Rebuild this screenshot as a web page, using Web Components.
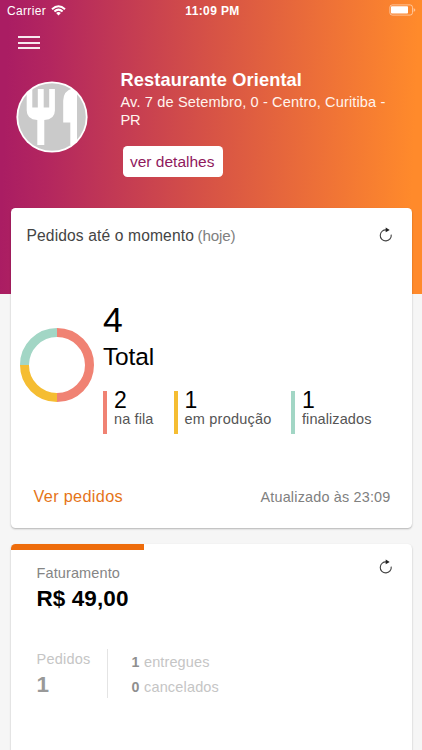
<!DOCTYPE html>
<html lang="pt-BR"><head><meta charset="utf-8"><title>Restaurante Oriental</title>
<style>
html,body{margin:0;height:750px;overflow:hidden;background:#f6f6f6;font-family:"Liberation Sans",Arial,sans-serif}
</style></head><body>
<restaurant-app></restaurant-app>
<script>
const define=(name,html,ready)=>customElements.define(name,class extends HTMLElement{
  constructor(){super();this.attachShadow({mode:'open'}).innerHTML=html}
  connectedCallback(){if(ready)ready.call(this)}
});

/* One line of text: s = size, lh = line height, w = tracked width, c = colour, b = bold */
define('fit-text',`<style>:host{display:block;white-space:nowrap;flex:none}span{display:inline-block;vertical-align:top}</style><span><slot></slot></span>`,function(){
  const g=k=>this.getAttribute(k), s=this.shadowRoot.querySelector('span');
  this.style.fontSize=g('s')+'px';
  this.style.lineHeight=(g('lh')||20)+'px';
  this.style.height=(g('lh')||20)+'px';
  if(g('c'))this.style.color=g('c');
  if(this.hasAttribute('b'))this.style.fontWeight='700';
  const w=parseFloat(g('w'));
  if(w){
    const n=this.textContent.length;
    s.style.letterSpacing=((w-s.getBoundingClientRect().width)/n)+'px';
    this.style.width=w+'px';
  }
});

define('refresh-icon',`<style>:host{display:block;width:14px;height:16px}svg{display:block}</style>
<svg width="14" height="16" viewBox="0 0 14 16"><path d="M7.6 3A5.5 5.5 0 1 0 12.2 7.6" fill="none" stroke="#444" stroke-width="1.15"/><path d="M6.7.6L10.7 2.9L6.7 5.3Z" fill="#222"/></svg>`);

define('menu-icon',`<style>:host{display:flex;flex-direction:column;justify-content:space-between;width:22px;height:13px}i{height:2px;background:#fff;opacity:.9}</style><i></i><i></i><i></i>`);

define('wifi-icon',`<style>:host{display:block;width:15px;height:11px}svg{display:block}</style>
<svg width="15" height="11" viewBox="0 0 15 11" fill="none" stroke="#fff" stroke-width="2"><path d="M1 4.2Q7.5-1.8 14 4.2M3.4 6.5Q7.5 2.8 11.6 6.5"/><path d="M7.5 10.6L5.1 8.1Q7.5 6.1 9.9 8.1Z" fill="#fff" stroke="none"/></svg>`);

define('battery-icon',`<style>:host{display:block;width:27px;height:12px}svg{display:block}</style>
<svg width="27" height="12" viewBox="0 0 27 12"><rect x=".9" y=".9" width="22.6" height="10.2" rx="2.4" fill="none" stroke="#fff" stroke-opacity=".5"/><rect x="2" y="2.2" width="17" height="7.4" rx=".8" fill="#fff"/><path d="M24.6 4Q26.4 5 26.4 6T24.6 8Z" fill="#fff" fill-opacity=".5"/></svg>`);

define('restaurant-avatar',`<style>:host{display:block;width:72px;height:72px;flex:none}svg{display:block}</style>
<svg width="72" height="72" viewBox="0 0 72 72"><defs><clipPath id="c"><circle cx="36" cy="36" r="35"/></clipPath></defs>
<circle cx="36" cy="36" r="35.6" fill="#fff"/><circle cx="36" cy="36" r="33.8" fill="#cacaca"/>
<g fill="#fff" clip-path="url(#c)"><path d="M10.7 8H16.3V26.5H21.8V8H27.7V26.5H33.2V8H38.9V29.5Q38.9 38.4 28.3 39V64H21.3V39Q10.7 38.4 10.7 29.5Z"/>
<path d="M61 8V64H54.3V41.5H47.2V19.5Q47.6 10 56.2 7.6Q59 7 61 8Z"/></g></svg>`);

define('status-bar',`<style>:host{display:grid;grid-template-columns:1fr auto 1fr;height:22px;color:#fff;padding:0 6px 0 7px;box-sizing:border-box}
.l{display:flex;gap:5px}wifi-icon{margin-top:5px}battery-icon{justify-self:end;margin-top:4px}.t{margin-left:2px}</style>
<div class="l"><fit-text s="12" lh="22" w="39">Carrier</fit-text><wifi-icon></wifi-icon></div>
<fit-text class="t" s="12" lh="22" b w="54.5">11:09 PM</fit-text><battery-icon></battery-icon>`);

define('detail-button',`<style>:host{display:block;box-sizing:border-box;width:100px;height:31px;border-radius:4.5px;background:#fff;color:#8f195d;padding:5px 0 0 7.5px}</style><fit-text s="15.5" lh="21" w="85"><slot></slot></fit-text>`);

define('restaurant-header',`<style>:host{display:block;height:293.5px;box-sizing:border-box;background:linear-gradient(92deg,#aa1d63 2%,#b3265f 12%,#d65246 49%,#ee7137 76%,#ff8a2b 97%);color:#fff}
menu-icon{margin:14px 0 0 18px}.p{display:flex;padding:21px 0 0 16px;gap:32.5px}restaurant-avatar{margin-top:11px}detail-button{margin:19.5px 0 0 2px}.a{color:#fff4ee}</style>
<status-bar></status-bar><menu-icon></menu-icon>
<div class="p"><restaurant-avatar></restaurant-avatar><div>
<fit-text s="18.2" lh="20" b w="181.5">Restaurante Oriental</fit-text>
<div class="a"><fit-text s="14.6" lh="24" w="265">Av. 7 de Setembro, 0 - Centro, Curitiba -</fit-text>
<fit-text s="14.6" lh="12" w="20">PR</fit-text></div>
<detail-button>ver detalhes</detail-button></div></div>`);

define('ui-card',`<style>:host{display:block;box-sizing:border-box;width:401px;background:#fff;border-radius:4.5px;box-shadow:0 1px 2px rgba(0,0,0,.28);overflow:hidden}</style><slot></slot>`);

define('donut-chart',`<style>:host{display:block;width:74px;height:74px;flex:none}svg{display:block}</style>
<svg width="74" height="74" viewBox="0 0 74 74" fill="none" stroke-width="9"><path d="M37 4.5A32.5 32.5 0 0 1 37 69.5" stroke="#f08273"/><path d="M37 69.5A32.5 32.5 0 0 1 4.5 37" stroke="#f5bd32"/><path d="M4.5 37A32.5 32.5 0 0 1 37 4.5" stroke="#a2d6c5"/></svg>`);

define('order-stat',`<style>:host{display:block;box-sizing:border-box;height:43px;border-left:4px solid var(--bar);padding-left:7px;flex:none}</style><slot></slot>`);

define('orders-card',`<style>:host{display:block}ui-card{height:320px}
.h{display:flex;padding:18px 19px 0 16px}.h refresh-icon{margin:1px 0 0 auto}.h fit-text+fit-text{margin-left:3.5px}
.m{display:flex;padding:56px 0 0 9.5px;gap:9px}donut-chart{margin-top:26px}
.s{display:flex;margin-top:18px}.s>:nth-child(2){margin-left:20px}.s>:nth-child(3){margin-left:19.5px}
.f{display:flex;justify-content:space-between;padding:53px 21px 0 23px}</style>
<ui-card><div class="h"><fit-text s="15.6" w="167.5" c="#444">Pedidos até o momento</fit-text><fit-text s="15.2" w="38" c="#808080">(hoje)</fit-text><refresh-icon></refresh-icon></div>
<div class="m"><donut-chart></donut-chart><div>
<fit-text s="35.5" lh="36" w="20">4</fit-text><fit-text s="24.5" lh="32" w="51" style="margin-top:3px">Total</fit-text>
<div class="s">
<order-stat style="--bar:#f08273"><fit-text s="23" lh="19" w="13">2</fit-text><fit-text s="14.5" lh="19" w="39.5" c="#555">na fila</fit-text></order-stat>
<order-stat style="--bar:#f5bd32"><fit-text s="23" lh="19" w="13">1</fit-text><fit-text s="14.5" lh="19" w="87" c="#555">em produção</fit-text></order-stat>
<order-stat style="--bar:#a2d6c5"><fit-text s="23" lh="19" w="13">1</fit-text><fit-text s="14.5" lh="19" w="69.5" c="#555">finalizados</fit-text></order-stat>
</div></div></div>
<div class="f"><fit-text s="16.3" lh="19" w="89.5" c="#e57418">Ver pedidos</fit-text><fit-text s="14.4" lh="21" w="130" c="#808080">Atualizado às 23:09</fit-text></div></ui-card>`);

define('revenue-card',`<style>:host{display:block}ui-card{height:240px}.bar{width:133.5px;height:6px;background:#ee6c0b}
.h{display:flex;justify-content:space-between;padding:13px 19px 0 26px}refresh-icon{margin-top:-4px}
.b{display:flex;padding:34px 0 0 26px}.q{width:70px;border-right:1px solid #e4e4e4;height:49px}.r{padding:1px 0 0 24px}.r div{display:flex}</style>
<ui-card><div class="bar"></div><div class="h"><div><fit-text s="14.5" lh="20" w="83.5" c="#858585">Faturamento</fit-text><fit-text s="22.5" lh="34" b w="92" style="margin-top:-1px;margin-bottom:-1px">R$ 49,00</fit-text></div><refresh-icon></refresh-icon></div>
<div class="b"><div class="q"><fit-text s="14.5" lh="20" w="54" c="#c5c5c5">Pedidos</fit-text><fit-text s="22.5" lh="31" b c="#999">1</fit-text></div>
<div class="r"><div><fit-text s="14.2" lh="24.5" b w="12.5" c="#8f8f8f">1</fit-text><fit-text s="14.5" lh="24.5" w="65.5" c="#c5c5c5">entregues</fit-text></div>
<div><fit-text s="14.2" lh="24.5" b w="12.5" c="#8f8f8f">0</fit-text><fit-text s="14.5" lh="24.5" w="75" c="#c5c5c5">cancelados</fit-text></div></div></div></ui-card>`);

define('restaurant-app',`<style>:host{display:block;width:422px;height:750px;overflow:hidden}main{display:flex;flex-direction:column;gap:16px;padding-left:10.5px;margin-top:-85.5px}</style>
<restaurant-header></restaurant-header><main><orders-card></orders-card><revenue-card></revenue-card></main>`);
</script></body></html>
